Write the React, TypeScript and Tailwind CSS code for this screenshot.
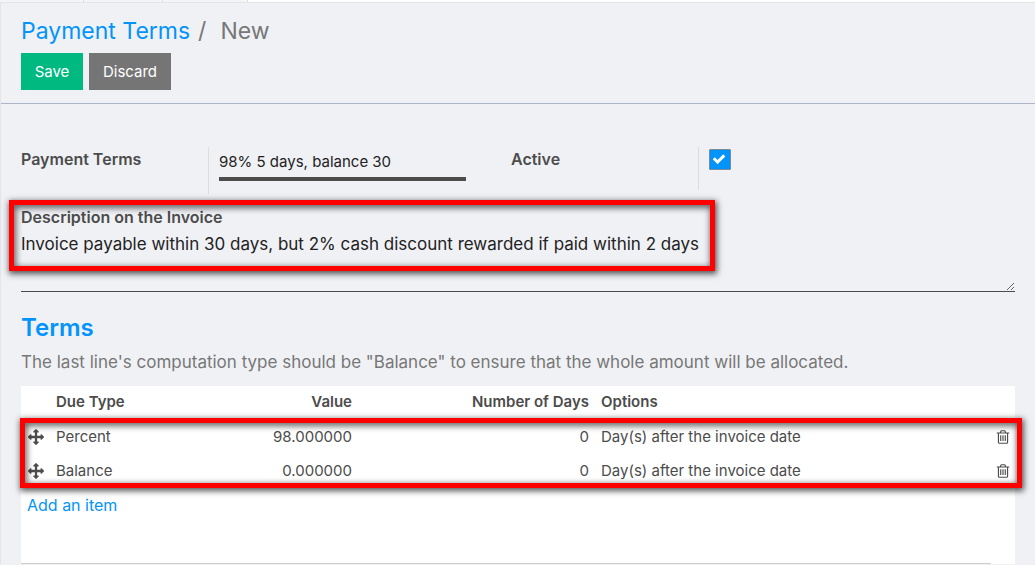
import { useState } from "react";

const ARROWS =
  "M1792 896q0 26-19 45l-256 256q-19 19-45 19t-45-19-19-45v-128h-384v384h128q26 0 45 19t19 45-19 45l-256 256q-19 19-45 19t-45-19l-256-256q-19-19-19-45t19-45 45-19h128v-384h-384v128q0 26-19 45t-45 19-45-19l-256-256q-19-19-19-45t19-45l256-256q19-19 45-19t45 19 19 45v128h384v-384h-128q-26 0-45-19t-19-45 19-45l256-256q19-19 45-19t45 19l256 256q19 19 19 45t-19 45-45 19h-128v384h384v-128q0-26 19-45t45-19 45 19l256 256q19 19 19 45z";
const CHECK =
  "M1671 566q0 40-28 68l-724 724-136 136q-28 28-68 28t-68-28l-136-136-362-362q-28-28-28-68t28-68l136-136q28-28 68-28t68 28l294 295 656-657q28-28 68-28t68 28l136 136q28 28 28 68z";
const TRASH =
  "M704 736v576q0 14-9 23t-23 9h-64q-14 0-23-9t-9-23v-576q0-14 9-23t23-9h64q14 0 23 9t9 23zm256 0v576q0 14-9 23t-23 9h-64q-14 0-23-9t-9-23v-576q0-14 9-23t23-9h64q14 0 23 9t9 23zm256 0v576q0 14-9 23t-23 9h-64q-14 0-23-9t-9-23v-576q0-14 9-23t23-9h64q14 0 23 9t9 23zm128 724v-948h-896v948q0 22 7 40.5t14.5 27 10.5 8.5h832q3 0 10.5-8.5t14.5-27 7-40.5zm-672-1076h448l-48-117q-7-9-17-11h-317q-10 2-17 11zm928 32v64q0 14-9 23t-23 9h-96v948q0 83-47 143.5t-113 60.5h-832q-66 0-113-58.5t-47-141.5v-952h-96q-14 0-23-9t-9-23v-64q0-14 9-23t23-9h309l70-167q15-37 54-63t79-26h320q40 0 79 26t54 63l70 167h309q14 0 23 9t9 23z";

function Icon({ path, className }: { path: string; className: string }) {
  return (
    <svg viewBox="0 0 1792 1792" fill="currentColor" aria-hidden="true" className={className}>
      <path d={path} />
    </svg>
  );
}

function Highlight({ className }: { className: string }) {
  return (
    <div
      aria-hidden="true"
      className={`pointer-events-none absolute border-[5px] border-[#fe0000] shadow-[1px_2px_6px_1px_rgba(0,0,0,0.65),inset_1px_2px_6px_1px_rgba(0,0,0,0.6)] ${className}`}
    />
  );
}

const terms = [
  { type: "Percent", value: "98.000000", days: 0, option: "Day(s) after the invoice date" },
  { type: "Balance", value: "0.000000", days: 0, option: "Day(s) after the invoice date" },
];

export default function App() {
  const [active, setActive] = useState(true);
  return (
    <div className="min-h-screen bg-[#f0f1f5] font-['Inter',sans-serif] text-[15px] leading-5 text-[#4c4c4c]">
      <div className="flex h-[2px] bg-white">
        <div className="w-[84px] border-r border-[#e0e0e0] bg-[#f5f5f7]" />
        <div className="w-[79px] border-r border-[#e0e0e0] bg-[#f5f5f7]" />
        <div className="w-[85px] border-r border-[#e0e0e0] bg-[#f5f5f7]" />
      </div>
      <div className="border-t border-l border-[#e4e5e8]">
        <header className="border-b border-[#afb4c9] px-5 pt-3 pb-[13px]">
          <nav aria-label="Breadcrumb" className="flex h-8 items-center text-[23px] leading-8">
            <a href="#terms" className="text-[#0394fb]">Payment Terms</a>
            <span className="ml-2 text-[#777777]">/</span>
            <span className="ml-[14px] text-[#777777]">New</span>
          </nav>
          <div className="mt-[6px] flex gap-[6px]">
            <button type="button" className="h-[37px] w-[62px] bg-[#00b981] text-white">Save</button>
            <button type="button" className="h-[37px] w-[82px] bg-[#757575] text-white">Discard</button>
          </div>
        </header>

        <main className="px-5 pt-[43px]">
          <div className="mr-[14px] grid grid-cols-2">
            <div className="flex pr-[45px]">
              <label htmlFor="name" className="w-[187px] shrink-0 pt-[2px] text-[16px] leading-5 font-semibold">Payment Terms</label>
              <div className="h-[47px] min-w-0 flex-1 border-l border-[#dddddd] pl-[10px]">
                <input
                  id="name"
                  defaultValue="98% 5 days, balance 30"
                  className="h-[34px] w-full border-b-4 border-[#4c4c4c] bg-transparent pb-[2px] text-[#222222] outline-none"
                />
              </div>
            </div>
            <div className="flex">
              <label htmlFor="active" className="w-[187px] shrink-0 pt-[2px] text-[16px] leading-5 font-semibold">Active</label>
              <div className="h-[43px] flex-1 border-l border-[#dddddd] pt-[2px] pl-[10px]">
                <span className="relative block h-[21px] w-[22px]">
                  <input
                    id="active"
                    type="checkbox"
                    checked={active}
                    onChange={(e) => setActive(e.target.checked)}
                    className="block h-full w-full appearance-none rounded-[1px] border border-[#7a8a99] bg-white checked:bg-[#0394fb]"
                  />
                  {active && (
                    <Icon path={CHECK} className="pointer-events-none absolute top-[3px] left-[3px] size-[14px] text-white" />
                  )}
                </span>
              </div>
            </div>
          </div>

          <div className="relative mt-[13px]">
            <label htmlFor="note" className="block h-5 text-[16px] leading-5 font-semibold">Description on the Invoice</label>
            <textarea
              id="note"
              defaultValue="Invoice payable within 30 days, but 2% cash discount rewarded if paid within 2 days"
              className="mt-1 block h-[61px] w-full resize-y border-b border-[#4c4c4c] bg-transparent pt-[3px] text-[17px] leading-5 text-[#222222] outline-none"
            />
            <Highlight className="-top-[7px] -left-3 h-[71px] w-[706px]" />
          </div>

          <h2 className="mt-5 text-[24px] leading-8 font-semibold text-[#0394fb]">Terms</h2>
          <p className="mt-2 text-[17px] leading-5 text-[#777777]">
            The last line's computation type should be "Balance" to ensure that the whole amount will be allocated.
          </p>

          <div className="relative mt-[14px] h-[178px] bg-white">
            <table className="w-full table-fixed border-collapse">
              <thead>
                <tr className="h-[34px] text-left align-top">
                  <th className="w-[35px]" aria-label="Reorder" />
                  <th className="w-[150px] pt-[6px] font-semibold">Due Type</th>
                  <th className="w-[146px] pt-[6px] text-right font-semibold">Value</th>
                  <th className="w-[237px] pt-[6px] text-right font-semibold">Number of Days</th>
                  <th className="pt-[6px] pl-3 font-semibold">Options</th>
                  <th className="w-6" aria-label="Delete" />
                </tr>
              </thead>
              <tbody>
                {terms.map((t) => (
                  <tr key={t.type} className="h-[34px]">
                    <td>
                      <button type="button" aria-label={`Move ${t.type}`} className="ml-[7px] block">
                        <Icon path={ARROWS} className="size-4" />
                      </button>
                    </td>
                    <td>{t.type}</td>
                    <td className="text-right">{t.value}</td>
                    <td className="text-right">{t.days}</td>
                    <td className="pl-3">{t.option}</td>
                    <td>
                      <button type="button" aria-label={`Delete ${t.type}`} className="ml-1 block">
                        <Icon path={TRASH} className="size-4" />
                      </button>
                    </td>
                  </tr>
                ))}
                <tr className="h-[34px]">
                  <td colSpan={6} className="pl-[6px] text-[16px] leading-5">
                    <a href="#add" className="text-[#0394fb]">Add an item</a>
                  </td>
                </tr>
              </tbody>
            </table>
            <div className="mt-[41px] mr-6 border-t border-[#cccccc]" />
            <Highlight className="top-8 -right-[7px] -left-px h-[70px]" />
          </div>
        </main>
      </div>
    </div>
  );
}
